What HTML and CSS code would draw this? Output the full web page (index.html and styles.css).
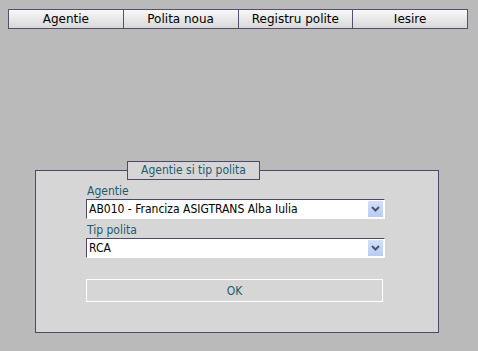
FILE: index.html
```html
<!DOCTYPE html>
<html lang="ro">
<head>
  <meta charset="UTF-8" />
  <title>Agentie si tip polita</title>
  <link rel="stylesheet" href="styles.css">
</head>
<body>
  <div class="meniu">
    <button class="meniu-btn">Agentie</button>
    <button class="meniu-btn">Polita noua</button>
    <button class="meniu-btn">Registru polite</button>
    <button class="meniu-btn">Iesire</button>
  </div>

  <fieldset class="caseta">
    <legend class="caseta-titlu">Agentie si tip polita</legend>

    <label class="eticheta">Agentie</label>
    <div class="lista">
      <span class="lista-text">AB010 - Franciza ASIGTRANS Alba Iulia</span>
      <span class="lista-sageata">
        <svg width="9" height="6" viewBox="0 0 9 6"><path d="M1 1 L4.5 4.5 L8 1" fill="none" stroke="#4a5478" stroke-width="2"/></svg>
      </span>
    </div>

    <label class="eticheta">Tip polita</label>
    <div class="lista">
      <span class="lista-text">RCA</span>
      <span class="lista-sageata">
        <svg width="9" height="6" viewBox="0 0 9 6"><path d="M1 1 L4.5 4.5 L8 1" fill="none" stroke="#4a5478" stroke-width="2"/></svg>
      </span>
    </div>

    <button class="btn-ok">OK</button>
  </fieldset>
</body>
</html>
```

FILE: styles.css
```css
body {
  margin: 8px;
  background-color: #bababa;
  font-family: "DejaVu Sans", Verdana, sans-serif;
  font-size: 12px;
}

.meniu {
  display: flex;
  width: 460px;
  margin-top: 1px;
}

.meniu-btn {
  flex: 1;
  height: 20px;
  margin: 0;
  padding: 0;
  border: 1px solid #574d6e;
  border-left-width: 0;
  background: linear-gradient(#f8f8f8, #d8d8d8);
  font-family: "DejaVu Sans", Verdana, sans-serif;
  font-size: 12px;
  color: #000;
}

.meniu-btn:first-child {
  border-left-width: 1px;
}

.caseta {
  width: 302px;
  margin: 132px 0 0 27px;
  padding: 4px 50px 30px 50px;
  border: 1px solid #4f4868;
  background-color: #d6d6d6;
  font-family: "DejaVu Sans Condensed", "DejaVu Sans", sans-serif;
  font-size: 12px;
}

.caseta-titlu {
  margin-left: 41px;
  padding: 1px 13px;
  border: 1px solid #4f4868;
  background-color: #d6d6d6;
  color: #1f5b6b;
  line-height: 15px;
}

.eticheta {
  display: block;
  color: #1f5b6b;
  line-height: 15px;
  padding-left: 1px;
}

.lista {
  display: flex;
  align-items: center;
  width: 297px;
  height: 18px;
  border-top: 1px solid #4f4868;
  border-left: 1px solid #4f4868;
  border-right: 1px solid #fff;
  border-bottom: 1px solid #fff;
  background-color: #fff;
  margin-bottom: 4px;
}

.lista-text {
  flex: 1;
  padding-left: 2px;
}

.lista-sageata {
  display: flex;
  align-items: center;
  justify-content: center;
  width: 15px;
  height: 16px;
  margin-right: 1px;
  background: linear-gradient(#d4e0f8, #b8cbf4);
}

.btn-ok {
  display: block;
  width: 297px;
  height: 23px;
  margin-top: 21px;
  border: 1px solid #fff;
  background-color: #d6d6d6;
  color: #1f5b6b;
  font-family: "DejaVu Sans Condensed", "DejaVu Sans", sans-serif;
  font-size: 12px;
}
```
